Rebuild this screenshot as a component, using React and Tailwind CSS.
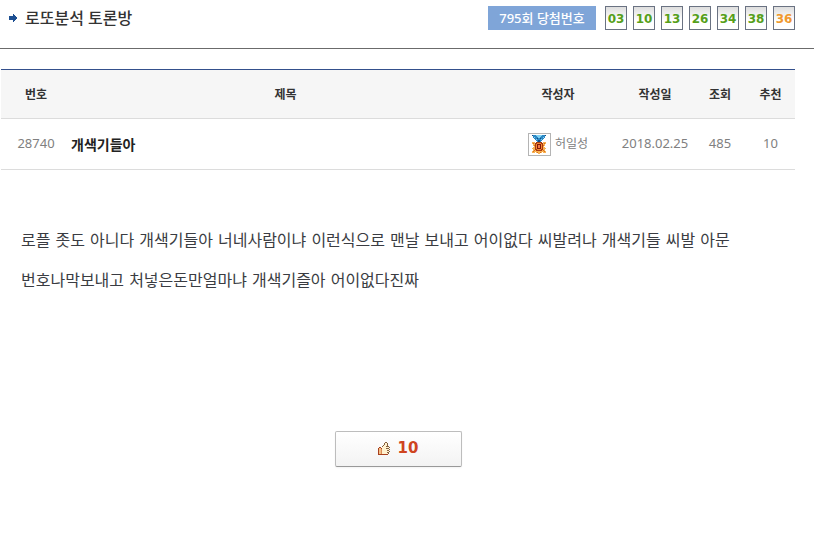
import React, { useState } from "react"

const winning = ["03", "10", "13", "26", "34", "38"]
const bonus = "36"

const post = {
  id: 28740,
  title: "개색기들아",
  writer: "허일성",
  date: "2018.02.25",
  views: 485,
  lines: [
    "로플 좃도 아니다 개색기들아 너네사람이냐 이런식으로 맨날 보내고 어이없다 씨발려나 개색기들 씨발 아문",
    "번호나막보내고 처넣은돈만얼마냐 개색기즐아 어이없다진짜",
  ],
}

const ArrowIcon = () => (
  <svg width="8" height="8" viewBox="0 0 8 8" shapeRendering="crispEdges" aria-hidden="true">
    <path fill="#1c4f92" d="M0 2h4V0h1v1h1v1h1v1h1v2H7v1H6v1H5v1H4V6H0z" />
  </svg>
)

const MedalIcon = () => (
  <svg width="23" height="23" viewBox="0 0 23 23" shapeRendering="crispEdges" aria-hidden="true">
    <path fill="#fff" stroke="#b4b4b4" d="M.5 .5h22v22H.5z" />
    {/* ribbon */}
    <path fill="#2c88c4" d="M4 2h14v1h-1v2h-1v1h-1v1h-1v1h-1v1H9V8H8V7H7V6H6V5H5V3H4z" />
    <path fill="#7fd0f2" d="M8 2h6v1h-1v1h-1v1h-2V4H9V3H8zM6 4h1v1H6zM15 4h1v1h-1zM8 6h1v1H8zM13 6h1v1h-1z" />
    <path fill="#174a80" d="M4 2h1v1H4zM17 2h1v1h-1zM9 5h1v1H9zM12 5h1v1h-1zM10 7h2v2h-2z" />
    {/* star */}
    <path fill="#f9b252" d="M4 9h3v1h1V9h6v1h1V9h3v2h-1v2h-1v1h1v1h1v1h-1v2h1v2h-3v-1h-1v1h-2v1h-2v-1H8v-1H7v1H4v-2h1v-2H4v-1h1v-1h1v-1H5v-2H4z" />
    <path fill="#d9701f" d="M5 10h1v1H5zM16 10h1v1h-1zM6 12h1v1H6zM15 12h1v1h-1zM6 17h1v1H6zM15 17h1v1h-1zM5 18h1v1H5zM16 18h1v1h-1zM9 19h1v1H9zM12 19h1v1h-1z" />
    <path fill="#a83a12" d="M8 9h6v1h1v7h-1v1H8v-1H7v-7h1z" />
    <path fill="#f28a35" d="M9 10h4v1h1v5h-1v1H9v-1H8v-5h1z" />
    <path fill="#84190a" d="M9 11h4v5H9z" />
    <path fill="#f47a45" d="M10 12h2v3h-2z" />
  </svg>
)

const ThumbIcon = () => (
  <svg width="12" height="13" viewBox="0 0 12 13" shapeRendering="crispEdges" aria-hidden="true">
    <path fill="#fff1cf" d="M3 6h1V5h1V4h1V3h1V1h2v3h2v8H3z" />
    <path
      fill="#85603f"
      d="M7 0h2v1H7zM6 1h1v2H6zM9 1h1v3H9zM5 3h1v1H5zM4 4h1v1H4zM8 4h3v1H8zM11 5h1v1h-1zM8 6h3v1H8zM11 7h1v1h-1zM9 8h2v1H9zM11 9h1v1h-1zM9 10h2v1H9zM10 11h1v1h-1z"
    />
    <path fill="#a8401f" d="M1 5h2v1H1zM0 6h1v6H0zM3 6h1v1H3zM0 12h10v1H0z" />
    <path fill="#f3bf85" d="M1 6h2v6H1z" />
    <path fill="#d98a55" d="M3 7h1v5H3z" />
  </svg>
)

const Ball = ({ children, color }) => (
  <li
    className={`flex h-6 w-[22px] items-center justify-center border border-gray-500 bg-linear-to-b from-[#dedede] to-white to-60% pt-0.5 font-['DejaVu_Sans',sans-serif] text-[12px] font-bold ${color}`}
  >
    {children}
  </li>
)

const App = () => {
  const [likes, setLikes] = useState(10)

  return (
    <div className="min-h-screen bg-white font-['Noto_Sans','Noto_Sans_CJK_KR',sans-serif] text-[#333]">
      <div className="mr-6">
        <header className="flex items-center justify-between border-b border-[#6b6b6b] pt-1.5 pr-[19px] pb-[18px] pl-[9px]">
          <h1 className="flex h-6 items-center gap-2 text-[16px] leading-6 font-medium">
            <ArrowIcon />
            로또분석 토론방
          </h1>
          <div className="flex items-center gap-[9px]">
            <strong className="h-6 w-[108px] bg-[#7fa5d8] text-center text-[13px] leading-6 font-medium text-white">
              795회 당첨번호
            </strong>
            <ul className="flex gap-1.5">
              {winning.map((n) => (
                <Ball key={n} color="text-[#569f1a]">{n}</Ball>
              ))}
              <Ball color="text-[#f0992e]">{bonus}</Ball>
            </ul>
          </div>
        </header>

        <main className="mt-5 mr-[19px] ml-px">
          <table className="w-full table-fixed text-center text-[13px]">
            <colgroup>
              <col className="w-[70px]" />
              <col />
              <col className="w-[116px]" />
              <col className="w-[78px]" />
              <col className="w-[52px]" />
              <col className="w-[49px]" />
            </colgroup>
            <thead>
              <tr className="h-[49px] border-t border-b border-t-[#34508c] border-b-[#dcdcdc] bg-[#f6f6f6] text-[12px] [&>th]:pt-0.5">
                <th>번호</th>
                <th>제목</th>
                <th>작성자</th>
                <th>작성일</th>
                <th>조회</th>
                <th>추천</th>
              </tr>
            </thead>
            <tbody>
              <tr className="h-[51px] border-b border-[#dcdcdc] text-[#808080]">
                <td>{post.id}</td>
                <td className="text-left text-[14px] font-bold text-[#222]">{post.title}</td>
                <td>
                  <span className="flex items-center justify-center gap-1 text-[12px]">
                    <MedalIcon />
                    {post.writer}
                  </span>
                </td>
                <td>{post.date}</td>
                <td>{post.views}</td>
                <td>{likes}</td>
              </tr>
            </tbody>
          </table>

          <div className="px-5 pt-[51px] font-['DejaVu_Sans','Noto_Sans_CJK_KR',sans-serif] text-[16px] leading-10 text-[#3a3c42]">
            {post.lines.map((line) => (
              <p key={line}>{line}</p>
            ))}
          </div>

          <div className="mt-[130px] flex justify-center">
            <button
              type="button"
              aria-label={`추천 ${likes}`}
              onClick={() => setLikes(likes + 1)}
              className="flex h-9 w-[127px] items-center justify-center gap-2 rounded-xs border border-[#bdbdbd] border-b-[#999] bg-linear-to-b from-white to-[#f3f3f3] pb-0.5 font-['DejaVu_Sans',sans-serif] text-[15px] font-bold text-[#cf4420] shadow-xs"
            >
              <ThumbIcon />
              {likes}
            </button>
          </div>
        </main>
      </div>
    </div>
  )
}

export default App
